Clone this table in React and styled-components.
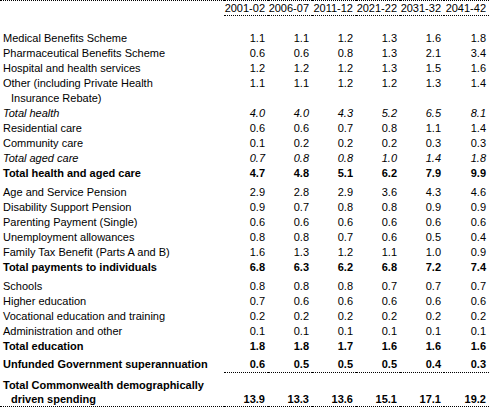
import React from "react";
import styled, { createGlobalStyle } from "styled-components";

const Global = createGlobalStyle`
    html, body {
        margin: 0;
        padding: 0;
        background: #ffffff;
    }
    body {
        font-family: "Liberation Sans", Arial, sans-serif;
        font-size: 11px;
        color: #000000;
    }
`;

const Table = styled.table`
    width: 489px;
    table-layout: fixed;
    border-collapse: collapse;
    border-top: 1px dotted #000;
    border-bottom: 1px dotted #000;
`;

const Col = styled.col`
    width: ${(props) => props.w}px;
`;

const HeadCell = styled.th`
    font-weight: normal;
    text-align: right;
    padding: 0 3px 0 0;
    height: 14px;
    line-height: 14px;
    vertical-align: bottom;
    white-space: nowrap;
    border-bottom: ${(props) => (props.line ? "1px dotted #000" : "none")};
`;

const Row = styled.tr`
    font-style: ${(props) => (props.kind === "italic" ? "italic" : "normal")};
    font-weight: ${(props) => (props.kind === "bold" ? "bold" : "normal")};
    line-height: ${(props) => (props.tight ? 14 : 15)}px;
`;

const Label = styled.td`
    text-align: left;
    padding: ${(props) => props.space || 0}px 0 0 3px;
    vertical-align: top;
`;

const Indent = styled.span`
    display: block;
    padding-left: 8px;
`;

const Num = styled.td`
    text-align: right;
    padding: ${(props) => props.space || 0}px 3px 0 0;
    vertical-align: ${(props) => (props.bottom ? "bottom" : "top")};
    white-space: nowrap;
`;

const RuleCell = styled.td`
    padding: 0;
    height: 0;
    border-top: ${(props) => (props.line ? "1px dotted #000" : "none")};
`;

const years = ["2001-02", "2006-07", "2011-12", "2021-22", "2031-32", "2041-42"];
const widths = [224, 44, 44, 44, 44, 44, 45];

const rows = [
    { label: "Medical Benefits Scheme", v: ["1.1", "1.1", "1.2", "1.3", "1.6", "1.8"], space: 15 },
    { label: "Pharmaceutical Benefits Scheme", v: ["0.6", "0.6", "0.8", "1.3", "2.1", "3.4"] },
    { label: "Hospital and health services", v: ["1.2", "1.2", "1.2", "1.3", "1.5", "1.6"] },
    { label: "Other (including Private Health", second: "Insurance Rebate)", v: ["1.1", "1.1", "1.2", "1.2", "1.3", "1.4"] },
    { label: "Total health", v: ["4.0", "4.0", "4.3", "5.2", "6.5", "8.1"], kind: "italic" },
    { label: "Residential care", v: ["0.6", "0.6", "0.7", "0.8", "1.1", "1.4"] },
    { label: "Community care", v: ["0.1", "0.2", "0.2", "0.2", "0.3", "0.3"] },
    { label: "Total aged care", v: ["0.7", "0.8", "0.8", "1.0", "1.4", "1.8"], kind: "italic" },
    { label: "Total health and aged care", v: ["4.7", "4.8", "5.1", "6.2", "7.9", "9.9"], kind: "bold" },
    { label: "Age and Service Pension", v: ["2.9", "2.8", "2.9", "3.6", "4.3", "4.6"], space: 4 },
    { label: "Disability Support Pension", v: ["0.9", "0.7", "0.8", "0.8", "0.9", "0.9"] },
    { label: "Parenting Payment (Single)", v: ["0.6", "0.6", "0.6", "0.6", "0.6", "0.6"] },
    { label: "Unemployment allowances", v: ["0.8", "0.8", "0.7", "0.6", "0.5", "0.4"] },
    { label: "Family Tax Benefit (Parts A and B)", v: ["1.6", "1.3", "1.2", "1.1", "1.0", "0.9"] },
    { label: "Total payments to individuals", v: ["6.8", "6.3", "6.2", "6.8", "7.2", "7.4"], kind: "bold" },
    { label: "Schools", v: ["0.8", "0.8", "0.8", "0.7", "0.7", "0.7"], space: 4 },
    { label: "Higher education", v: ["0.7", "0.6", "0.6", "0.6", "0.6", "0.6"] },
    { label: "Vocational education and training", v: ["0.2", "0.2", "0.2", "0.2", "0.2", "0.2"] },
    { label: "Administration and other", v: ["0.1", "0.1", "0.1", "0.1", "0.1", "0.1"] },
    { label: "Total education", v: ["1.8", "1.8", "1.7", "1.6", "1.6", "1.6"], kind: "bold", tight: true },
    { label: "Unfunded Government superannuation", v: ["0.6", "0.5", "0.5", "0.5", "0.4", "0.3"], kind: "bold", space: 4 },
];

const total = {
    label: "Total Commonwealth demographically",
    second: "driven spending",
    v: ["13.9", "13.3", "13.6", "15.1", "17.1", "19.2"],
};

export default function App() {
    return (
        <>
            <Global />
            <Table>
                <colgroup>
                    {widths.map((w, i) => (
                        <Col key={i} w={w} />
                    ))}
                </colgroup>
                <thead>
                    <tr>
                        <HeadCell />
                        {years.map((y) => (
                            <HeadCell key={y} line>
                                {y}
                            </HeadCell>
                        ))}
                    </tr>
                </thead>
                <tbody>
                    {rows.map((r) => (
                        <Row key={r.label} kind={r.kind} tight={r.tight}>
                            <Label space={r.space}>
                                {r.label}
                                {r.second && <Indent>{r.second}</Indent>}
                            </Label>
                            {r.v.map((n, i) => (
                                <Num key={i} space={r.space}>
                                    {n}
                                </Num>
                            ))}
                        </Row>
                    ))}
                    <tr>
                        <RuleCell />
                        <RuleCell line colSpan={6} />
                    </tr>
                    <Row kind="bold" tight>
                        <Label space={5}>
                            {total.label}
                            <Indent>{total.second}</Indent>
                        </Label>
                        {total.v.map((n, i) => (
                            <Num key={i} bottom>
                                {n}
                            </Num>
                        ))}
                    </Row>
                </tbody>
            </Table>
        </>
    );
}
